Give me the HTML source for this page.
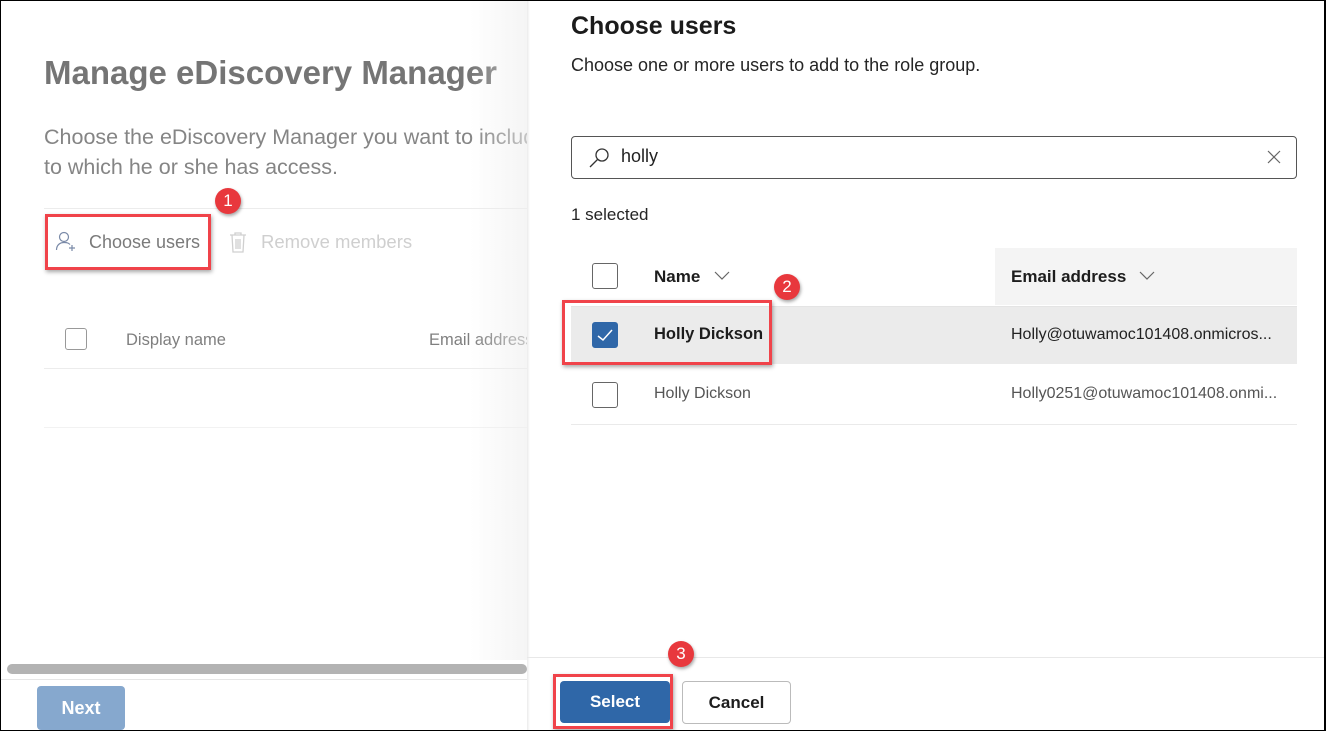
<!DOCTYPE html>
<html><head><meta charset="utf-8"><style>
*{margin:0;padding:0;box-sizing:border-box}
body{width:1326px;height:731px;overflow:hidden;background:#fff;font-family:"Liberation Sans",Arial,sans-serif;position:relative}
.a{position:absolute;white-space:nowrap}
.frame{position:absolute;left:0;top:0;width:1326px;height:731px;border:1px solid #000;border-right:2px solid #000;pointer-events:none;z-index:50}
.red{position:absolute;border:3px solid #f0434a;box-shadow:1px 2px 4px rgba(0,0,0,.35);z-index:20}
.badge{position:absolute;width:26px;height:26px;border-radius:50%;background:#e8383d;color:#fff;font-size:17px;text-align:center;line-height:26px;box-shadow:1px 2px 3px rgba(0,0,0,.35);z-index:21}
.cb{position:absolute;width:26px;height:26px;border:1px solid #666;border-radius:3px;background:#fff}
#left{position:absolute;left:0;top:0;width:527px;height:731px;overflow:hidden}
</style></head><body>
<div id="left">
<div class="a" style="left:44px;top:54px;font-size:33px;font-weight:bold;color:#757575">Manage eDiscovery Manager</div>
<div class="a" style="left:44px;top:122px;font-size:21.5px;color:#858585;line-height:30px">Choose the eDiscovery Manager you want to include<br>to which he or she has access.</div>
<div class="a" style="left:44px;top:208px;width:483px;height:1px;background:#ececec"></div>
<svg class="a" style="left:55px;top:230px" width="24" height="24" viewBox="0 0 24 24" fill="none" stroke="#7a8aa8" stroke-width="1.2"><circle cx="9" cy="7" r="4.5"/><path d="M1.5 20c0-5 3.5-7.5 7.5-7.5s5 1 6 2"/><path d="M17 15v6M14 18h6"/></svg>
<div class="a" style="left:89px;top:232px;font-size:18px;color:#7a7a7a">Choose users</div>
<svg class="a" style="left:229px;top:231px" width="18" height="22" viewBox="0 0 18 22" fill="none" stroke="#d0d0d0" stroke-width="1.3"><path d="M1 4h16M6 4V2h6v2M3 4l1 17h10l1-17M7 8v10M9 8v10M11 8v10"/></svg>
<div class="a" style="left:261px;top:231px;font-size:18.5px;color:#cfcfcf">Remove members</div>
<div class="cb" style="left:65px;top:328px;width:22px;height:22px;border-color:#999"></div>
<div class="a" style="left:126px;top:331px;font-size:16.5px;color:#7f7f7f">Display name</div>
<div class="a" style="left:429px;top:331px;font-size:16.5px;color:#7f7f7f">Email address</div>
<div class="a" style="left:44px;top:368px;width:483px;height:1px;background:#ececec"></div>
<div class="a" style="left:44px;top:427px;width:483px;height:1px;background:#f2f2f2"></div>
<div class="a" style="left:470px;top:0;width:57px;height:660px;background:linear-gradient(to right,rgba(240,240,240,0),rgba(238,238,238,.6))"></div>
<div class="a" style="left:7px;top:664px;width:520px;height:10px;border-radius:5px;background:#b3b3b3"></div>
<div class="a" style="left:0;top:679px;width:527px;height:1px;background:#e6e6e6"></div>
<div class="a" style="left:37px;top:686px;width:88px;height:44px;border-radius:4px;background:#86a8ce;color:#fff;font-size:18px;font-weight:bold;text-align:center;line-height:44px">Next</div>
</div>
<div class="red" style="left:45px;top:214px;width:166px;height:56px"></div>
<div class="badge" style="left:215px;top:188px">1</div>

<div class="a" style="left:527px;top:0;width:3px;height:731px;background:linear-gradient(to right,rgba(0,0,0,.08),rgba(0,0,0,0))"></div>
<div class="a" style="left:571px;top:12px;font-size:25px;font-weight:bold;color:#1b1b1b">Choose users</div>
<div class="a" style="left:571px;top:55px;font-size:18px;color:#252525">Choose one or more users to add to the role group.</div>
<div class="a" style="left:571px;top:136px;width:726px;height:43px;border:1px solid #555;border-radius:4px"></div>
<svg class="a" style="left:588px;top:146px" width="24" height="24" viewBox="0 0 24 24" fill="none" stroke="#333" stroke-width="1.3"><circle cx="14" cy="9" r="6"/><path d="M9.5 13.5L2 21"/></svg>
<div class="a" style="left:621px;top:146px;font-size:18px;color:#222">holly</div>
<svg class="a" style="left:1266px;top:149px" width="16" height="16" viewBox="0 0 16 16" stroke="#666" stroke-width="1.2"><path d="M2 2l12 12M14 2L2 14"/></svg>
<div class="a" style="left:571px;top:205px;font-size:17px;color:#252525">1 selected</div>
<div class="a" style="left:995px;top:248px;width:302px;height:57px;background:#f4f4f4"></div>
<div class="cb" style="left:592px;top:263px"></div>
<div class="a" style="left:654px;top:267px;font-size:17px;font-weight:bold;color:#1d1d1d">Name</div>
<svg class="a" style="left:714px;top:271px" width="16" height="10" viewBox="0 0 16 10" fill="none" stroke="#666" stroke-width="1.2"><path d="M1 1l7 7 7-7"/></svg>
<div class="a" style="left:1011px;top:267px;font-size:17px;font-weight:bold;color:#1d1d1d">Email address</div>
<svg class="a" style="left:1139px;top:271px" width="16" height="10" viewBox="0 0 16 10" fill="none" stroke="#666" stroke-width="1.2"><path d="M1 1l7 7 7-7"/></svg>
<div class="a" style="left:571px;top:306px;width:726px;height:1px;background:#e4e4e4"></div>
<div class="a" style="left:571px;top:307px;width:726px;height:57px;background:#ebebeb"></div>
<div class="cb" style="left:592px;top:322px;background:#2f67a8;border-color:#2f67a8"></div>
<svg class="a" style="left:596px;top:327px" width="18" height="16" viewBox="0 0 18 16" fill="none" stroke="#fff" stroke-width="1.5"><path d="M2 9l5 4 9-10"/></svg>
<div class="a" style="left:654px;top:325px;font-size:16.5px;font-weight:bold;color:#1d1d1d">Holly Dickson</div>
<div class="a" style="left:1011px;top:326px;font-size:16px;color:#222">Holly@otuwamoc101408.onmicros...</div>
<div class="cb" style="left:592px;top:382px"></div>
<div class="a" style="left:654px;top:385px;font-size:16px;color:#555">Holly Dickson</div>
<div class="a" style="left:1011px;top:385px;font-size:16px;color:#555">Holly0251@otuwamoc101408.onmi...</div>
<div class="a" style="left:571px;top:424px;width:726px;height:1px;background:#eaeaea"></div>
<div class="red" style="left:562px;top:300px;width:210px;height:65px"></div>
<div class="badge" style="left:774px;top:274px">2</div>
<div class="a" style="left:527px;top:657px;width:799px;height:1px;background:#e8e8e8"></div>
<div class="a" style="left:560px;top:681px;width:110px;height:42px;border-radius:4px;background:#2f67a8;color:#fff;font-size:17px;font-weight:bold;text-align:center;line-height:42px">Select</div>
<div class="a" style="left:682px;top:681px;width:109px;height:43px;border-radius:4px;border:1px solid #bbb;color:#1d1d1d;font-size:17px;font-weight:bold;text-align:center;line-height:41px">Cancel</div>
<div class="red" style="left:553px;top:674px;width:120px;height:55px"></div>
<div class="badge" style="left:668px;top:641px">3</div>
<div class="frame"></div>
</body></html>
